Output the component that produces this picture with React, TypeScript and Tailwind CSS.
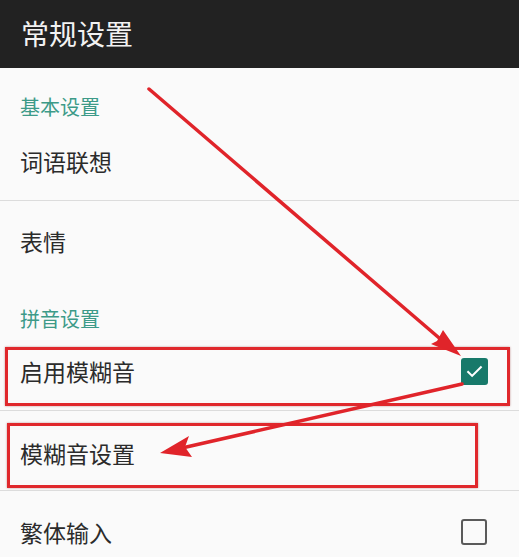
import React from "react";

const font = { fontFamily: '"Noto Sans CJK SC", "Noto Sans", sans-serif' };

function Divider() {
  return <div className="h-px bg-[#dcdcdc]" />;
}

export default function App() {
  return (
    <div className="relative w-[519px] h-[557px] overflow-hidden bg-[#fafafa]" style={font}>
      <div className="h-[68px] bg-[#222222] flex items-center pl-[21px] pb-[3px]">
        <span className="text-[28px] leading-none text-[#f2f2f2]">常规设置</span>
      </div>
      <div className="h-[54px] pt-[29px] pl-[20px] text-[20px] leading-[20px] text-[#3d9a88]">基本设置</div>
      <div className="h-[78px] flex items-center pl-[20px] text-[23px] text-[#2b2b2b]">词语联想</div>
      <Divider />
      <div className="h-[80px] flex items-center pl-[20px] text-[23px] text-[#2b2b2b]">表情</div>
      <div className="h-[54px] pt-[28px] pl-[20px] text-[20px] leading-[20px] text-[#3d9a88]">拼音设置</div>
      <div className="h-[75px] flex items-center justify-between pl-[20px] pr-[31px] pb-[2px] text-[23px] text-[#2b2b2b]">
        <span>启用模糊音</span>
        <div className="w-[27px] h-[27px] rounded-[3px] bg-[#17796a] flex items-center justify-center">
          <svg width="19" height="19" viewBox="0 0 24 24" fill="none" stroke="white" strokeWidth="2.6" strokeLinecap="square">
            <path d="M4 12.5l5 5L20 6.5" />
          </svg>
        </div>
      </div>
      <Divider />
      <div className="h-[79px] flex items-center pl-[20px] pt-[5px] text-[23px] text-[#2b2b2b]">模糊音设置</div>
      <Divider />
      <div className="h-[82px] flex items-center justify-between pl-[20px] pr-[32px] text-[23px] text-[#2b2b2b]">
        <span>繁体输入</span>
        <div className="w-[26px] h-[26px] rounded-[3px] border-[2.5px] border-[#5a5a5a]" />
      </div>

      {/* annotation boxes */}
      <div className="absolute left-[5px] top-[347px] w-[505px] h-[59px] border-[3px] border-[#e0282c] shadow-[0_0_2px_rgba(120,0,0,0.4)]" />
      <div className="absolute left-[7px] top-[423px] w-[471px] h-[65px] border-[3px] border-[#e0282c] shadow-[0_0_2px_rgba(120,0,0,0.4)]" />

      {/* arrows */}
      <svg className="absolute left-0 top-0" width="519" height="557" viewBox="0 0 519 557">
        <g stroke="#e0242a" strokeWidth="3.5" strokeLinecap="round" fill="none">
          <line x1="149" y1="89" x2="445" y2="343" />
          <line x1="462" y1="384" x2="182" y2="448" />
        </g>
        <polygon points="461,356 431,344 437,341 443,330" fill="#e0242a" />
        <polygon points="160,453 189,436 185,447 192,457" fill="#e0242a" />
      </svg>
    </div>
  );
}
